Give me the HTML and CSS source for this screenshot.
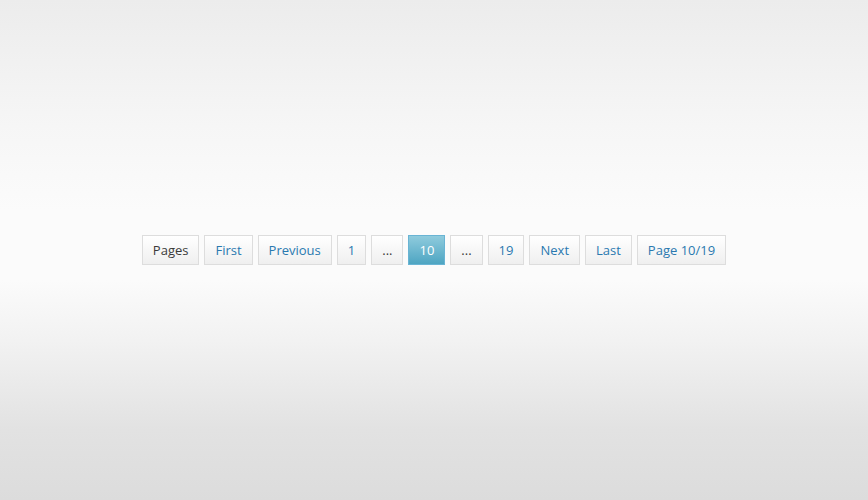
FILE: index.html
```html
<!DOCTYPE html>
<html>
<head>
<meta charset="utf-8">
<link rel="stylesheet" href="styles.css">
</head>
<body>
<div class="stage">
  <nav class="pagination">
    <span class="item label">Pages</span>
    <a class="item" href="#">First</a>
    <a class="item" href="#">Previous</a>
    <a class="item" href="#">1</a>
    <span class="item dots">...</span>
    <span class="item current">10</span>
    <span class="item dots">...</span>
    <a class="item" href="#">19</a>
    <a class="item" href="#">Next</a>
    <a class="item" href="#">Last</a>
    <a class="item" href="#">Page 10/19</a>
  </nav>
</div>
</body>
</html>
```
FILE: styles.css
```css
html, body {
  margin: 0;
  padding: 0;
  height: 100%;
}
body {
  background: linear-gradient(to bottom, #ececec 0%, #f6f6f6 25%, #fbfbfb 42%, #fbfbfb 56%, #f2f2f2 68%, #e2e2e2 86%, #dcdcdc 100%);
  font-family: "Open Sans", "DejaVu Sans", sans-serif;
}
.stage {
  height: 500px;
  display: flex;
  align-items: center;
  justify-content: center;
}
.pagination {
  display: flex;
  gap: 5px;
}
.item {
  display: block;
  height: 28px;
  line-height: 28px;
  padding: 0 10px;
  border: 1px solid #dddddd;
  background: linear-gradient(to bottom, #ffffff 0%, #efefef 100%);
  color: #2a79b0;
  font-size: 13px;
  text-decoration: none;
}
.label, .dots {
  color: #3a3a3a;
}
.current {
  color: #ffffff;
  border-color: #69b4d4;
  background: linear-gradient(to bottom, #8fcbdd 0%, #4ea5c2 100%);
}
```
